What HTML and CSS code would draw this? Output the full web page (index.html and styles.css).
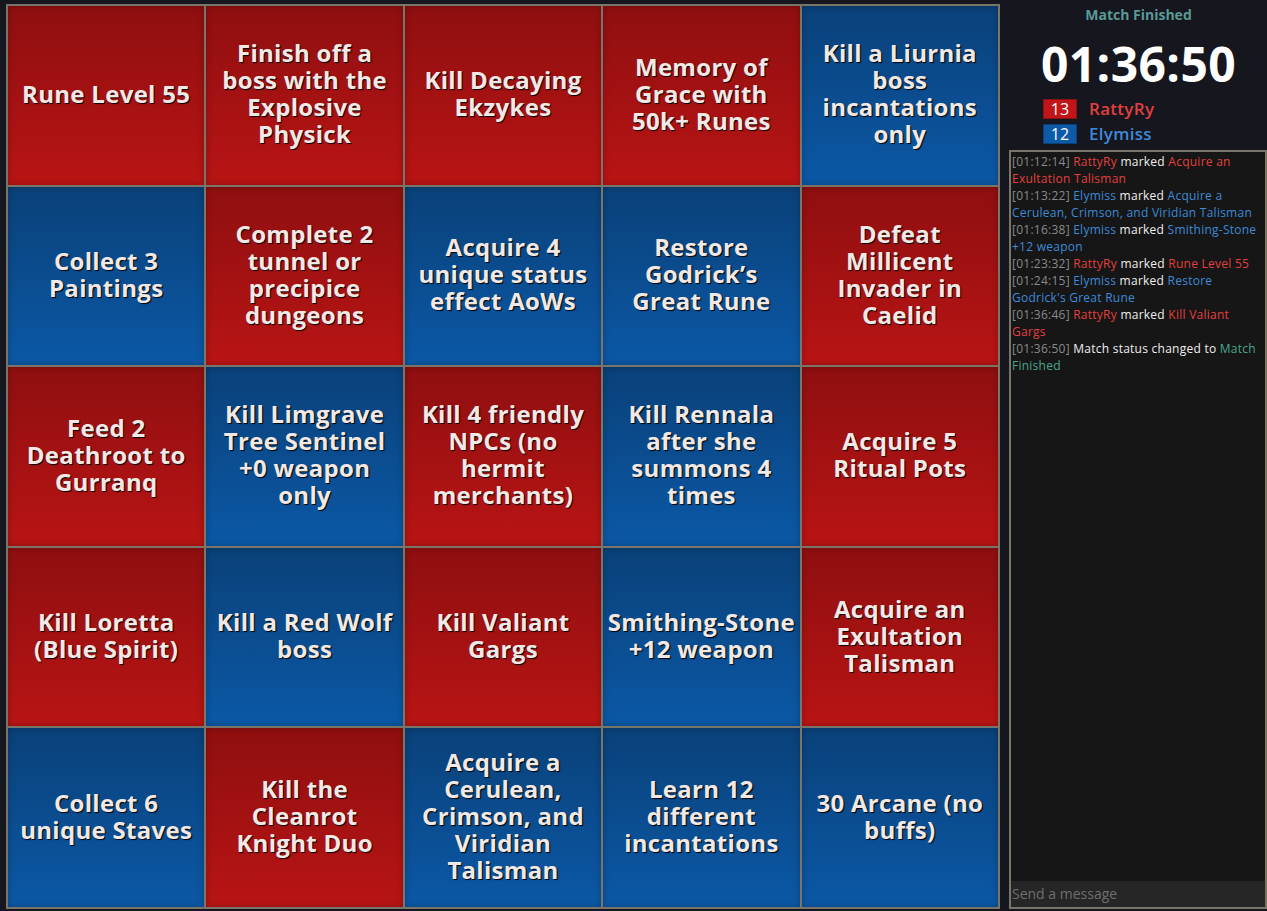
FILE: index.html
```html
<!DOCTYPE html>
<html>
<head>
<meta charset="utf-8">
<link rel="stylesheet" href="styles.css">
</head>
<body>
<div class="page">
  <div class="board">
    <div class="cell red">Rune Level 55</div>
    <div class="cell red">Finish off a boss with the Explosive Physick</div>
    <div class="cell red">Kill Decaying Ekzykes</div>
    <div class="cell red">Memory of Grace with 50k+ Runes</div>
    <div class="cell blue">Kill a Liurnia boss incantations only</div>

    <div class="cell blue">Collect 3 Paintings</div>
    <div class="cell red">Complete 2 tunnel or precipice dungeons</div>
    <div class="cell blue">Acquire 4 unique status effect AoWs</div>
    <div class="cell blue">Restore Godrick’s Great Rune</div>
    <div class="cell red">Defeat Millicent Invader in Caelid</div>

    <div class="cell red">Feed 2 Deathroot to Gurranq</div>
    <div class="cell blue">Kill Limgrave Tree Sentinel +0 weapon only</div>
    <div class="cell red">Kill 4 friendly NPCs (no hermit merchants)</div>
    <div class="cell blue">Kill Rennala after she summons 4 times</div>
    <div class="cell red">Acquire 5 Ritual Pots</div>

    <div class="cell red">Kill Loretta (Blue Spirit)</div>
    <div class="cell blue">Kill a Red Wolf boss</div>
    <div class="cell red">Kill Valiant Gargs</div>
    <div class="cell blue"><span><span class="nw">Smithing-Stone</span> +12 weapon</span></div>
    <div class="cell red">Acquire an Exultation Talisman</div>

    <div class="cell blue">Collect 6 unique Staves</div>
    <div class="cell red">Kill the Cleanrot Knight Duo</div>
    <div class="cell blue">Acquire a Cerulean, Crimson, and Viridian Talisman</div>
    <div class="cell blue">Learn 12 different incantations</div>
    <div class="cell blue">30 Arcane (no buffs)</div>
  </div>

  <div class="side">
    <div class="status">Match Finished</div>
    <div class="timer">01:36:50</div>
    <div class="scores">
      <div class="score"><span class="badge badge-red">13</span><span class="pname t-red">RattyRy</span></div>
      <div class="score"><span class="badge badge-blue">12</span><span class="pname t-blue">Elymiss</span></div>
    </div>
    <div class="chat">
      <div class="log">
        <div class="msg"><span class="ts">[01:12:14]</span> <span class="c-red">RattyRy</span> marked <span class="c-red">Acquire an Exultation Talisman</span></div>
        <div class="msg"><span class="ts">[01:13:22]</span> <span class="c-blue">Elymiss</span> marked <span class="c-blue">Acquire a Cerulean, Crimson, and Viridian Talisman</span></div>
        <div class="msg"><span class="ts">[01:16:38]</span> <span class="c-blue">Elymiss</span> marked <span class="c-blue">Smithing-Stone +12 weapon</span></div>
        <div class="msg"><span class="ts">[01:23:32]</span> <span class="c-red">RattyRy</span> marked <span class="c-red">Rune Level 55</span></div>
        <div class="msg"><span class="ts">[01:24:15]</span> <span class="c-blue">Elymiss</span> marked <span class="c-blue">Restore Godrick's Great Rune</span></div>
        <div class="msg"><span class="ts">[01:36:46]</span> <span class="c-red">RattyRy</span> marked <span class="c-red">Kill Valiant Gargs</span></div>
        <div class="msg"><span class="ts">[01:36:50]</span> Match status changed to <span class="c-teal">Match Finished</span></div>
      </div>
      <div class="input">Send a message</div>
    </div>
  </div>
</div>
</body>
</html>
```

FILE: styles.css
```css
html, body {
  margin: 0;
  padding: 0;
  background: #15161e;
  font-family: "Open Sans", "Noto Sans", sans-serif;
}

.page {
  display: flex;
  height: 911px;
  width: 1267px;
  overflow: hidden;
}

.board {
  margin: 4px 0 0 6px;
  width: 994px;
  height: 905px;
  box-sizing: border-box;
  padding: 2px;
  gap: 2px;
  background: #7a7569;
  display: grid;
  grid-template-columns: repeat(5, 1fr);
  grid-template-rows: repeat(5, 1fr);
}

.cell {
  display: flex;
  align-items: center;
  justify-content: center;
  text-align: center;
  padding: 0 6px 4px;
  color: #f2e9e6;
  font-weight: 700;
  font-size: 24px;
  letter-spacing: 0.3px;
  line-height: 27px;
  text-shadow: 1px 1px 1px #000;
  overflow: hidden;
}

.nw {
  white-space: nowrap;
}

.red {
  background: linear-gradient(#8f0f10, #b91414);
  box-shadow: inset 0 0 6px rgba(0, 0, 0, 0.25);
}

.blue {
  background: linear-gradient(#0a4179, #0b58a6);
  box-shadow: inset 0 0 6px rgba(0, 0, 0, 0.25);
}

.side {
  flex: 1;
  display: flex;
  flex-direction: column;
  margin-left: 3px;
}

.status {
  text-align: center;
  color: #5a9a95;
  font-weight: 700;
  font-size: 14px;
  margin-top: 6px;
  padding-left: 7px;
  line-height: 18px;
}

.timer {
  text-align: center;
  color: #fff;
  font-weight: 700;
  font-size: 48px;
  letter-spacing: 0.4px;
  line-height: 56px;
  margin-top: 12px;
  padding-left: 7px;
}

.scores {
  display: flex;
  flex-direction: column;
  gap: 5px;
  margin-left: 40px;
  margin-top: 7px;
}

.score {
  display: flex;
  align-items: center;
  gap: 12px;
  height: 20px;
}

.badge {
  width: 34px;
  height: 20px;
  box-sizing: border-box;
  color: #fff;
  font-size: 16px;
  line-height: 18px;
  text-align: center;
}

.badge-red {
  background: #c0161a;
  border: 1px solid #8a1012;
}

.badge-blue {
  background: #0d5aa8;
  border: 1px solid #0a3f78;
}

.pname {
  font-size: 17px;
  font-weight: 600;
  letter-spacing: 0.3px;
  line-height: 20px;
}

.t-red { color: #e2403e; }
.t-blue { color: #3d8ad8; }

.chat {
  margin: 6px 0 2px 6px;
  flex: 1;
  border: 2px solid #7a7569;
  background: #161616;
  display: flex;
  flex-direction: column;
}

.log {
  flex: 1;
  padding: 1px 6px 1px 1px;
  font-size: 12px;
  letter-spacing: 0.25px;
  line-height: 17px;
  color: #eeeeee;
}

.ts { color: #8a8a8a; }
.c-red { color: #e2403e; }
.c-blue { color: #3d8ad8; }
.c-teal { color: #4aa58c; }

.input {
  background: #262626;
  color: #6e6e6e;
  font-size: 14px;
  line-height: 26px;
  padding: 0 1px;
}
```
